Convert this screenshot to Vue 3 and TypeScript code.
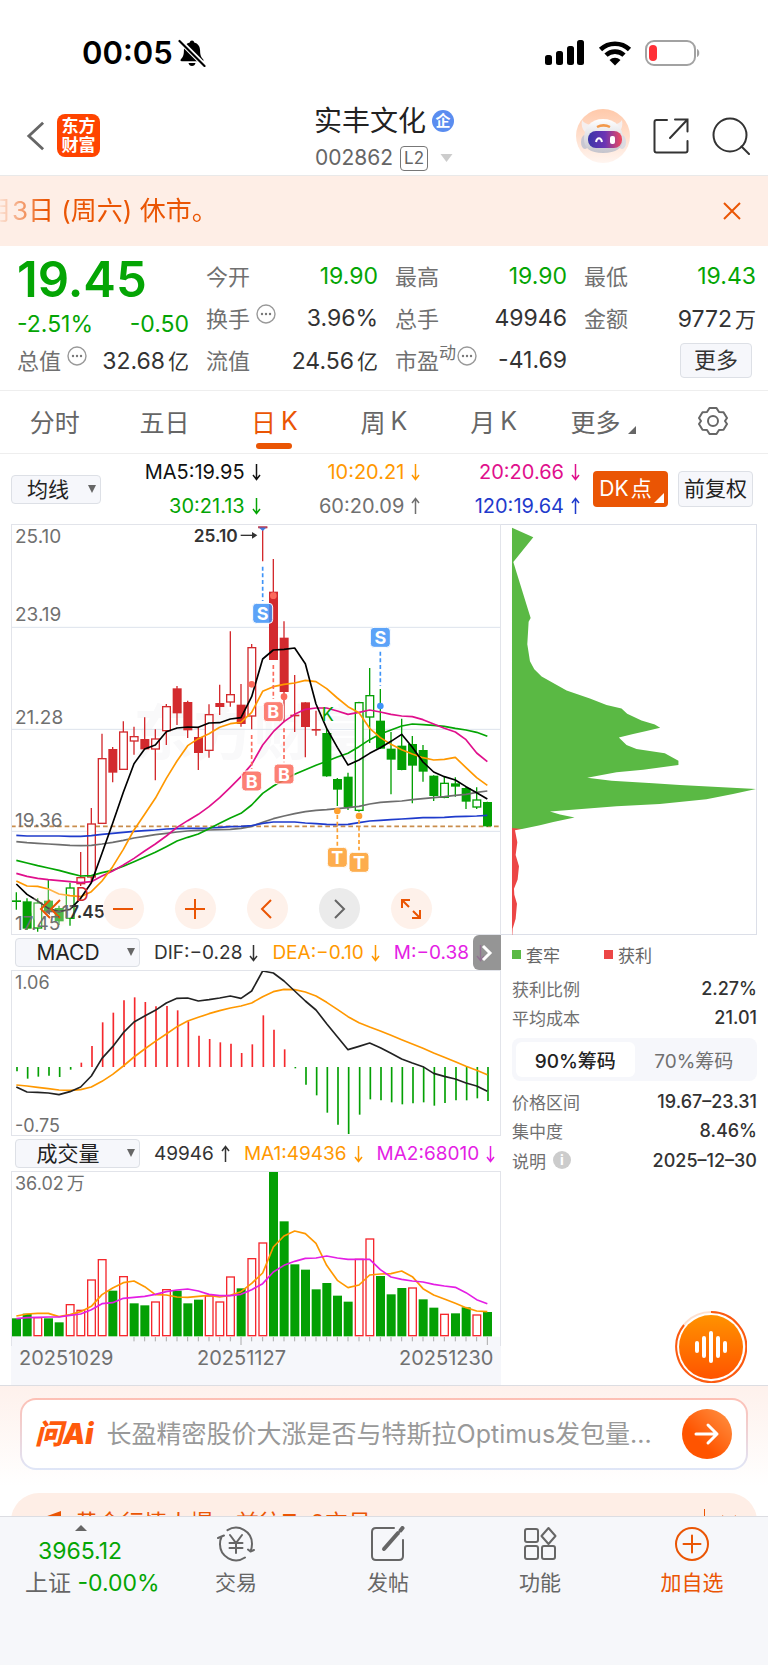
<script setup lang="ts">
import { h, ref } from 'vue'

type Tone = 'r' | 'g'
// upper wick, body top, body bottom, lower wick, tone, hollow body
type Candle = [number, number, number, number, Tone, boolean]

const Arrow = (props: { up?: boolean }) =>
  h('svg', { class: 'arrow', viewBox: '0 0 9 18', 'aria-hidden': 'true' }, [
    h('path', { d: props.up ? 'M4.5 17V1.5M1 6l3.5-4.5L8 6' : 'M4.5 1v15.5M1 12l3.5 4.5L8 12' }),
  ])
Arrow.props = { up: Boolean }

const Dots = () =>
  h('svg', { class: 'dots', viewBox: '0 0 20 20', 'aria-hidden': 'true' }, [
    h('circle', { cx: 10, cy: 10, r: 9, fill: 'none', stroke: '#999', 'stroke-width': 1.4 }),
    ...[6, 10, 14].map((cx) => h('circle', { cx, cy: 10, r: 1.2, fill: '#777' })),
  ])

const tabs = ['分时', '五日', '日K', '周K', '月K', '更多']
const tab = ref('日K')
const chips = ref('90')
const question = ref('')

const averages = [
  { text: 'MA5:19.95', tone: 'black', up: false },
  { text: '10:20.21', tone: 'orange', up: false },
  { text: '20:20.66', tone: 'pink', up: false },
  { text: '30:21.13', tone: 'green', up: false },
  { text: '60:20.09', tone: 'gray', up: true },
  { text: '120:19.64', tone: 'blue', up: true },
]

const STEP = 32.11
const at = (i: number) => Math.round(49 + i * STEP)
const line = (ys: number[]) => ys.map((y, i) => `${at(i)},${y}`).join(' ')

const candles: Candle[] = [
  [1132, 1157, 1160, 1184, 'g', false], [1150, 1160, 1240, 1245, 'g', false], [1150, 1163, 1240, 1250, 'g', true],
  [1095, 1158, 1188, 1195, 'g', false], [1172, 1180, 1218, 1230, 'g', false], [1103, 1118, 1211, 1232, 'g', true],
  [1011, 1087, 1107, 1113, 'r', true], [879, 926, 1087, 1103, 'r', true], [656, 730, 926, 926, 'r', true],
  [696, 703, 772, 802, 'r', false], [619, 650, 764, 764, 'r', true], [635, 664, 679, 719, 'r', true],
  [607, 673, 702, 702, 'r', false], [643, 671, 703, 796, 'r', true], [567, 574, 648, 690, 'r', true],
  [513, 521, 594, 630, 'r', false], [557, 562, 645, 669, 'r', false], [635, 667, 713, 765, 'r', false],
  [568, 598, 707, 728, 'r', true], [509, 565, 575, 600, 'r', false], [349, 538, 562, 575, 'r', true],
  [507, 570, 626, 635, 'r', false], [387, 397, 604, 643, 'r', true], [36, 36, 39, 139, 'r', false],
  [132, 231, 434, 434, 'r', false], [319, 369, 530, 622, 'r', false], [480, 600, 603, 651, 'r', false],
  [562, 563, 635, 727, 'r', false], [587, 643, 646, 662, 'r', false], [640, 655, 783, 785, 'g', false],
  [789, 793, 823, 873, 'g', false], [773, 786, 875, 885, 'g', false], [560, 562, 887, 890, 'g', true],
  [459, 541, 607, 684, 'g', true], [522, 618, 700, 702, 'g', false], [651, 702, 733, 838, 'g', false],
  [611, 693, 764, 766, 'g', false], [663, 688, 751, 865, 'g', false], [690, 706, 769, 800, 'g', false],
  [781, 783, 842, 858, 'g', false], [786, 804, 848, 850, 'g', true], [787, 806, 814, 845, 'g', false],
  [815, 820, 859, 882, 'g', false], [817, 854, 877, 882, 'g', true], [860, 862, 933, 935, 'g', false],
]

const priceLines = [
  { color: '#6e6e6e', ys: [980, 983, 985, 987, 989, 991, 992, 991, 987, 982, 976, 969, 964, 959, 955, 951, 948, 946, 945, 944, 943, 940, 934, 922, 911, 903, 896, 890, 886, 884, 881, 878, 874, 867, 862, 860, 858, 854, 851, 848, 845, 841, 838, 832, 828] },
  { color: '#1f3bcc', ys: [961, 963, 963, 963, 963, 964, 964, 962, 958, 955, 952, 949, 947, 945, 942, 941, 940, 940, 939, 937, 935, 934, 932, 925, 921, 921, 921, 924, 926, 928, 929, 928, 923, 918, 916, 914, 912, 910, 908, 908, 907, 905, 904, 903, 901] },
  { color: '#04a504', ys: [1036, 1044, 1052, 1059, 1066, 1075, 1083, 1082, 1073, 1066, 1054, 1040, 1026, 1012, 995, 978, 967, 957, 941, 925, 909, 895, 870, 835, 813, 795, 778, 764, 751, 739, 726, 715, 695, 674, 657, 645, 633, 627, 629, 631, 634, 640, 645, 652, 664] },
  { color: '#e0108c', ys: [1075, 1084, 1090, 1094, 1097, 1100, 1103, 1100, 1083, 1068, 1050, 1030, 1008, 987, 963, 937, 917, 898, 875, 848, 817, 785, 748, 690, 650, 620, 598, 583, 579, 579, 588, 598, 592, 585, 591, 598, 603, 605, 614, 627, 640, 651, 674, 714, 740] },
  { color: '#ff9800', ys: [1098, 1113, 1114, 1122, 1137, 1142, 1145, 1130, 1098, 1055, 1003, 945, 898, 850, 790, 738, 692, 671, 656, 637, 626, 622, 592, 529, 515, 508, 504, 496, 500, 521, 549, 575, 593, 640, 668, 688, 704, 717, 728, 735, 733, 727, 758, 788, 811] },
  { color: '#000', ys: [1107, 1138, 1158, 1180, 1190, 1183, 1150, 1103, 1015, 925, 832, 746, 702, 690, 650, 639, 636, 637, 624, 623, 612, 608, 545, 432, 405, 403, 399, 446, 567, 640, 697, 750, 735, 715, 698, 679, 658, 697, 741, 771, 785, 795, 815, 833, 852] },
]

const marks = [
  { i: 23, label: 'S', y: 295, from: 155, to: 258, dot: 0, color: '#3f93f7' },
  { i: 24, label: 'B', y: 590, from: 450, to: 552, dot: 242, color: '#fb6a5c' },
  { i: 22, label: 'B', y: 798, from: 660, to: 762, dot: 508, color: '#fb6a5c' },
  { i: 25, label: 'B', y: 777, from: 640, to: 742, dot: 545, color: '#fb6a5c' },
  { i: 34, label: 'S', y: 367, from: 410, to: 512, dot: 573, color: '#3f93f7' },
  { i: 30, label: 'T', y: 1027, from: 900, to: 992, dot: 888, color: '#fd9f2e' },
  { i: 32, label: 'T', y: 1042, from: 915, to: 1006, dot: 903, color: '#fd9f2e' },
]

const macdBars = [424, 446, 440, 437, 441, 419, 398, 348, 277, 248, 211, 202, 216, 229, 228, 241, 274, 317, 327, 337, 341, 369, 343, 256, 299, 358, 415, 464, 496, 548, 584, 612, 554, 508, 511, 517, 523, 520, 517, 527, 519, 511, 511, 505, 513]
const dif = [471, 486, 487, 489, 494, 485, 471, 438, 385, 350, 308, 276, 258, 241, 219, 205, 204, 213, 209, 204, 198, 205, 183, 123, 129, 153, 183, 213, 240, 281, 320, 359, 349, 339, 353, 370, 387, 399, 410, 430, 439, 447, 459, 468, 484]
const dea = [465, 468, 472, 476, 480, 481, 479, 471, 454, 433, 408, 381, 357, 334, 312, 290, 273, 262, 251, 242, 234, 228, 219, 200, 185, 178, 179, 186, 198, 217, 238, 260, 278, 291, 303, 316, 329, 342, 355, 369, 382, 395, 409, 421, 434]

const volTops = [563, 549, 559, 563, 575, 520, 537, 446, 385, 480, 436, 518, 524, 512, 475, 480, 518, 507, 494, 512, 437, 473, 382, 335, 123, 272, 401, 417, 476, 457, 495, 513, 384, 323, 436, 491, 472, 470, 506, 531, 549, 548, 530, 551, 544]
const volTones = 'ggrggrrrrgrggrrgggrrrgrrggggggggrrgggrggrggrg'
const volMa1 = [556, 550, 548, 548, 558, 552, 543, 527, 492, 472, 456, 451, 468, 492, 493, 499, 500, 497, 494, 499, 494, 483, 458, 427, 349, 316, 301, 309, 338, 404, 449, 471, 463, 433, 430, 429, 421, 438, 474, 493, 505, 518, 531, 541, 543]
const volMa2 = [564, 561, 560, 559, 559, 554, 550, 537, 519, 516, 503, 500, 497, 491, 483, 478, 475, 481, 491, 495, 495, 491, 477, 459, 424, 404, 392, 383, 382, 376, 382, 386, 386, 386, 417, 439, 446, 451, 454, 461, 466, 470, 486, 507, 519]
const ticks = Array.from({ length: 34 }, (_, k) => k + 11)

const tone = (t: string) => (t === 'r' ? '#d32a2e' : '#04a004')
</script>

<template>
  <div class="page">
    <div class="status">
      <span class="clock">00:05</span>
      <svg class="bell" viewBox="0 0 28 28" aria-hidden="true">
        <path d="M14 1.500c1.300 0 2 .8 2.200 1.900 3.900 1 5.900 4 5.900 8.200 0 5 1.200 6.700 3 8.700.8 1 .4 2-.9 2H3.800c-1.300 0-1.700-1-.9-2 1.800-2 3-3.700 3-8.700 0-4.200 2-7.200 5.900-8.200.2-1.100.9-1.900 2.200-1.900zM10.500 24h7c-.4 1.900-1.700 3-3.500 3s-3.100-1.100-3.500-3z" />
        <path d="M2.500 2.500 26 26" stroke="#fff" stroke-width="5" />
        <path d="M1.500 2 26.500 27" stroke="#000" stroke-width="2.200" stroke-linecap="round" />
      </svg>
      <svg class="signal" viewBox="0 0 40 26" aria-hidden="true">
        <rect y="15" width="7" height="10" rx="2.500" /><rect x="11" y="11" width="7" height="14" rx="2.500" />
        <rect x="22" y="6" width="7" height="19" rx="2.500" /><rect x="32" y="0" width="7" height="25" rx="2.500" />
      </svg>
      <svg class="wifi" viewBox="0 0 34 26" aria-hidden="true">
        <path d="M2.500 9.500a21 21 0 0 1 29 0M8 15.200a13 13 0 0 1 18 0" fill="none" stroke="#000" stroke-width="4.600" />
        <path d="M17 25.500l-5.500-5.600a8 8 0 0 1 11 0z" />
      </svg>
      <svg class="battery" viewBox="0 0 56 28" aria-hidden="true">
        <rect x="1" y="2" width="49" height="24" rx="8" fill="none" stroke="#a2a2a2" stroke-width="2" />
        <rect x="4" y="6" width="8" height="16" rx="4" fill="#ff3037" />
        <path d="M52 10c3 .5 3 7.500 0 8z" fill="#a2a2a2" />
      </svg>
    </div>

    <header class="header">
      <div class="side">
        <button class="plain" aria-label="返回">
          <svg class="back" viewBox="0 0 20 32"><path d="M18 2 3 16l15 14" fill="none" stroke="#666" stroke-width="3" /></svg>
        </button>
        <div class="brand"><span>东方</span><span>财富</span></div>
      </div>
      <div class="title">
        <h1>实丰文化<span class="badge">企</span></h1>
        <p>002862<span class="level">L2</span><svg class="drop" viewBox="0 0 12 8"><path d="M0 0h12L6 8z" fill="#ccc" /></svg></p>
      </div>
      <div class="side end">
        <button class="plain" aria-label="智能助手">
          <svg class="robot" viewBox="0 0 54 54">
            <defs>
              <linearGradient id="halo" x2="0" y2="1"><stop stop-color="#ffc9aa" /><stop offset="1" stop-color="#fff5f0" /></linearGradient>
              <linearGradient id="visor"><stop stop-color="#3a35a8" /><stop offset=".5" stop-color="#6b34b4" /><stop offset="1" stop-color="#f04a5c" /></linearGradient>
              <linearGradient id="shell" x2="0" y2="1"><stop stop-color="#fff" /><stop offset="1" stop-color="#c4c3cc" /></linearGradient>
            </defs>
            <circle cx="27" cy="27" r="27" fill="url(#halo)" />
            <path d="M6 11c-1 5 0 9 3 12l5-7c-3-1-6-2-8-5zM46 11c1 5 0 9-3 12l-5-7c3-1 6-2 8-5z" fill="#f5efef" />
            <ellipse cx="9" cy="33" rx="4" ry="7" fill="#c8c7d2" /><ellipse cx="46" cy="33" rx="4" ry="7" fill="#dcdbe2" />
            <path d="M27 10c12 0 20 8 20 20 0 9-7 14-20 14S8 39 8 30c0-12 7-20 19-20z" fill="url(#shell)" />
            <rect x="12" y="22" width="34" height="17" rx="8" fill="url(#visor)" />
            <path d="M21 18c4-2 9-2 13 0" fill="none" stroke="#f39a4c" stroke-width="2.500" />
            <path d="M20 33c1-5 5-5 6 0" fill="none" stroke="#fff" stroke-width="2" /><rect x="34" y="27" width="5" height="8" rx="2" fill="#fff" />
          </svg>
        </button>
        <button class="plain" aria-label="分享">
          <svg class="share" viewBox="0 0 36 36"><path d="M14 2H3.500Q1.500 2 1.500 4v28.500q0 2 2 2h29q2 0 2-2V23M22 1.500h12.500v12M34 2 17 20" /></svg>
        </button>
        <button class="plain" aria-label="搜索">
          <svg class="search" viewBox="0 0 38 38"><circle cx="18" cy="18" r="16.500" /><path d="m29.500 29.500 7.500 7.500" /></svg>
        </button>
      </div>
    </header>

    <div class="notice">
      <p>月3日 (周六) 休市。</p>
      <button class="plain" aria-label="关闭"><svg class="close" viewBox="0 0 18 18"><path d="m1 1 16 16M17 1 1 17" /></svg></button>
    </div>

    <section class="quote">
      <div class="last">
        <strong>19.45</strong>
        <div class="change"><span>-2.51%</span><span>-0.50</span></div>
      </div>
      <div class="cell"><span>今开</span><b class="green">19.90</b></div>
      <div class="cell"><span>最高</span><b class="green">19.90</b></div>
      <div class="cell"><span>最低</span><b class="green">19.43</b></div>
      <div class="cell"><span>换手<Dots /></span><b>3.96%</b></div>
      <div class="cell"><span>总手</span><b>49946</b></div>
      <div class="cell"><span>金额</span><b>9772<i>万</i></b></div>
      <div class="cell"><span>总值<Dots /></span><b>32.68<i>亿</i></b></div>
      <div class="cell"><span>流值</span><b>24.56<i>亿</i></b></div>
      <div class="cell"><span>市盈<sup>动</sup><Dots class="tight" /></span><b>-41.69</b></div>
      <div class="cell more"><button>更多</button></div>
    </section>

    <nav class="tabs">
      <button v-for="t in tabs" :key="t" :class="{ on: t === tab }" @click="tab = t">
        <template v-if="t.endsWith('K')">{{ t[0] }}<i>K</i></template>
        <template v-else>{{ t }}</template>
        <svg v-if="t === '更多'" class="corner" viewBox="0 0 8 8"><path d="M8 0v8H0z" fill="#666" /></svg>
      </button>
      <button aria-label="设置">
        <svg class="gear" viewBox="0 0 30 30">
          <path d="M11.500 2h7l2.500 4 4.500.3L29 12l-2 3 2 3-3.500 5.700-4.500.3-2.500 4h-7L9 24l-4.500-.3L1 18l2-3-2-3 3.500-5.700L9 6z" /><circle cx="15" cy="15" r="5" />
        </svg>
      </button>
    </nav>

    <section class="ma">
      <div class="pick small">
        <select aria-label="主图指标"><option>均线</option></select>
        <svg class="tri" viewBox="0 0 8 8"><path d="M0 0h8L4 8z" /></svg>
      </div>
      <div class="avgs">
        <span v-for="a in averages" :key="a.text" :class="a.tone">{{ a.text }}<Arrow :up="a.up" /></span>
      </div>
      <button class="dk">DK<i>点</i><svg viewBox="0 0 10 10"><path d="M10 0v10H0z" fill="#fff" /></svg></button>
      <button class="adj">前复权</button>
    </section>

    <section class="charts">
      <div class="left">
        <div class="plot">
          <svg viewBox="33 27 1470 1233" role="img" aria-label="日K线">
            <text class="mark-bg" x="400" y="720">东方财富</text>
            <path d="M33 337h1470M33 643h1470M33 949h1470" stroke="#dde3ec" stroke-width="3" />
            <path d="M33 934h1470" stroke="#c98d4c" stroke-width="5" stroke-dasharray="14 9" />
            <g v-for="(c, i) in candles" :key="i" :stroke="tone(c[4])" :fill="c[5] ? '#fff' : tone(c[4])">
              <path :d="`M${at(i)} ${c[0]}V${c[3]}`" stroke-width="4" />
              <rect :x="at(i) - 11" :y="c[1] + 1" width="23" :height="Math.max(c[2] - c[1] - 2, 1)" stroke-width="4" />
            </g>
            <polyline v-for="l in priceLines" :key="l.color" :points="line(l.ys)" :stroke="l.color" fill="none" stroke-width="5" stroke-linejoin="round" />
            <path d="M774 35h28l-14 13z" fill="#3f7be0" /><path d="M774 36h28" stroke="#d32a2e" stroke-width="3" />
            <g v-for="m in marks" :key="`${m.label}${m.i}`">
              <path :d="`M${at(m.i)} ${m.from}V${m.to}`" :stroke="m.color" stroke-width="5" stroke-dasharray="12 8" />
              <circle v-if="m.dot" :cx="at(m.i)" :cy="m.dot" r="10" :fill="m.color" />
              <rect :x="at(m.i) - 30" :y="m.y - 30" width="60" height="60" rx="11" :fill="m.color" fill-opacity=".85" stroke="#fff" stroke-width="3" />
              <text class="flag" :x="at(m.i)" :y="m.y + 20">{{ m.label }}</text>
            </g>
            <text class="dk-letter" x="227" y="1157" fill="#d32a2e">D</text>
            <text class="dk-letter" x="965" y="619" fill="#04a004">K</text>
            <text class="extreme" x="581" y="80">25.10</text>
            <path d="M722 61h44" stroke="#333" stroke-width="4" /><path d="m756 51 16 10-16 10z" fill="#333" />
            <text class="extreme" x="185" y="1210">17.45</text>
            <path d="M184 1190h-40" stroke="#333" stroke-width="4" /><path d="m150 1180-16 10 16 10z" fill="#333" />
          </svg>
          <div class="tools">
            <button class="ghost" aria-label="最早"><svg viewBox="0 0 30 30"><path d="M14 6 5 15l9 9M24 6l-9 9 9 9" /></svg></button>
            <button aria-label="缩小"><svg viewBox="0 0 30 30"><path d="M5 15h20" /></svg></button>
            <button aria-label="放大"><svg viewBox="0 0 30 30"><path d="M5 15h20M15 5v20" /></svg></button>
            <button aria-label="左移"><svg viewBox="0 0 30 30"><path d="m19 6-9 9 9 9" /></svg></button>
            <button class="off" aria-label="右移"><svg viewBox="0 0 30 30"><path d="m11 6 9 9-9 9" /></svg></button>
            <button aria-label="全屏"><svg viewBox="0 0 30 30"><path d="M6 14V6h8M6 6l7 7M24 16v8h-8M24 24l-7-7" /></svg></button>
          </div>
          <div class="axis price"><span>25.10</span><span>23.19</span><span>21.28</span><span>19.36</span><span>17.45</span></div>
        </div>

        <div class="bar">
          <div class="pick"><select aria-label="副图指标一"><option>MACD</option></select><svg class="tri" viewBox="0 0 8 8"><path d="M0 0h8L4 8z" /></svg></div>
          <span class="ink">DIF:−0.28<Arrow /></span><span class="orange">DEA:−0.10<Arrow /></span><span class="violet">M:−0.38<Arrow /></span>
          <button class="next" aria-label="展开"><svg viewBox="0 0 12 18"><path d="m2 2 7 7-7 7" /></svg></button>
        </div>
        <div class="plot">
          <svg viewBox="33 120 1470 498" role="img" aria-label="MACD">
            <path v-for="(y, i) in macdBars" :key="i" :d="`M${at(i) + 2} 411V${y}`" :stroke="y < 411 ? '#f5282d' : '#04a004'" stroke-width="5" />
            <polyline :points="line(dea)" fill="none" stroke="#ff9800" stroke-width="5" stroke-linejoin="round" />
            <polyline :points="line(dif)" fill="none" stroke="#222" stroke-width="5" stroke-linejoin="round" />
          </svg>
          <div class="axis"><span>1.06</span><span>-0.75</span></div>
        </div>

        <div class="bar">
          <div class="pick"><select aria-label="副图指标二"><option>成交量</option></select><svg class="tri" viewBox="0 0 8 8"><path d="M0 0h8L4 8z" /></svg></div>
          <span class="ink">49946<Arrow up /></span><span class="orange">MA1:49436<Arrow /></span><span class="violet">MA2:68010<Arrow /></span>
        </div>
        <div class="plot open">
          <svg viewBox="33 121 1470 525" role="img" aria-label="成交量">
            <path d="M33 618h1470v30H33z" fill="#f6f7fb" />
            <rect v-for="(y, i) in volTops" :key="i" :x="at(i) - 11" :y="y + 2" width="23" :height="613 - y" :fill="volTones[i] === 'r' ? '#fff' : '#04a004'" :stroke="volTones[i] === 'r' ? '#f5282d' : '#04a004'" stroke-width="4" />
            <polyline :points="line(volMa1)" fill="none" stroke="#ff9800" stroke-width="5" stroke-linejoin="round" />
            <polyline :points="line(volMa2)" fill="none" stroke="#e41ee4" stroke-width="5" stroke-linejoin="round" />
            <path v-for="i in ticks" :key="i" :d="`M${at(i)} 619V${i === 21 || i === 44 ? 643 : 632}`" stroke="#aaa" stroke-width="3" />
          </svg>
          <div class="axis"><span>36.02<i>万</i></span></div>
        </div>
        <div class="dates"><span>20251029</span><span>20251127</span><span>20251230</span></div>
      </div>

      <div class="right">
        <div class="chipplot">
          <svg viewBox="3 27 766 1233" role="img" aria-label="筹码分布">
            <path fill="#5ab944" d="M36 35 100 64 40 138 92 306 86 318 82 385 90 436 103 460 125 482 200 524 270 548 320 568 365 578 382 594 425 614 465 626 481 636 440 646 400 655 357 665 380 688 410 700 495 713 536 735V748L430 762 350 770 262 786 335 795 460 803 540 808 769 820 700 835 620 851 480 865 350 872 150 888 180 897 224 906 160 919 120 929 66 940H36z" />
            <path fill="#ec4646" d="M36 937 65 940 45 944 52 980 47 1018 57 1052 53 1092 42 1120 43 1138 51 1165 47 1210 38 1240 37 1259H36z" />
          </svg>
        </div>
        <div class="legend"><span><i class="sq g"></i>套牢</span><span><i class="sq r"></i>获利</span></div>
        <dl>
          <div><dt>获利比例</dt><dd>2.27%</dd></div>
          <div><dt>平均成本</dt><dd>21.01</dd></div>
        </dl>
        <div class="seg">
          <button :class="{ on: chips === '90' }" @click="chips = '90'">90%筹码</button>
          <button :class="{ on: chips === '70' }" @click="chips = '70'">70%筹码</button>
        </div>
        <dl>
          <div><dt>价格区间</dt><dd>19.67–23.31</dd></div>
          <div><dt>集中度</dt><dd>8.46%</dd></div>
          <div class="note"><dt>说明<span class="info">i</span></dt><dd>2025–12–30</dd></div>
        </dl>
      </div>
      <button class="voice" aria-label="语音播报">
        <svg viewBox="0 0 72 72">
          <defs><linearGradient id="fab" x2="0" y2="1"><stop stop-color="#ff9200" /><stop offset="1" stop-color="#ff5400" /></linearGradient></defs>
          <circle cx="36" cy="36" r="35" fill="#fff" stroke="#fde0d0" stroke-width="2" />
          <path d="M36 1A35 35 0 1 1 9 14" fill="none" stroke="#fb5a10" stroke-width="2" />
          <circle cx="36" cy="36" r="32" fill="url(#fab)" />
          <path d="M22 32v8M29 27v18M36 22v28M43 27v18M50 32v8" stroke="#fff" stroke-width="4" stroke-linecap="round" />
        </svg>
      </button>
    </section>

    <section class="ask">
      <form class="askbox" @submit.prevent>
        <em>问Ai</em>
        <input v-model="question" aria-label="提问" placeholder="长盈精密股价大涨是否与特斯拉Optimus发包量..." />
        <button aria-label="发送"><svg viewBox="0 0 26 24"><path d="M2 12h21M14 3l9 9-9 9" /></svg></button>
      </form>
      <div class="promo">
        <svg class="horn" viewBox="0 0 24 20"><path d="M0 8 22 0v20L0 14z" fill="#ea5504" /></svg>
        <span>黄金行情火爆，前往T+0交易</span>
        <i></i>
        <svg class="x2" viewBox="0 0 16 16"><path d="m1 1 14 14M15 1 1 15" stroke="#ea5504" stroke-width="2" /></svg>
      </div>
    </section>

    <nav class="dock">
      <a class="index" href="#index">
        <svg viewBox="0 0 12 6"><path d="M6 0l6 6H0z" fill="#666" /></svg>
        <span class="green">3965.12</span>
        <span>上证 <b class="green">-0.00%</b></span>
      </a>
      <a href="#trade">
        <svg viewBox="0 0 38 36"><path d="M10.500 4.200A16 16 0 0 1 35 18c0 3-.5 5-1.500 7M33.500 25.500l-2.500-2M33.500 25.500l3.500-1.500M28 31.500A16 16 0 0 1 3 18c0-3 .5-5 1.500-7M4.500 10.500 1 12M4.500 10.500 7 9.500M13 9l6 8 6-8M12.500 17h13M12.500 22h13M19 17v10" /></svg>交易
      </a>
      <a href="#post">
        <svg viewBox="0 0 38 36"><path d="M25 2H7Q3 2 3 6v24q0 4 4 4h23q4 0 4-4V14" /><path d="M15 23 29 7" stroke-width="4" /><path d="m31.500 4.500 2-2.500" stroke-width="4" /></svg>发帖
      </a>
      <a href="#tools">
        <svg viewBox="0 0 38 36"><rect x="4" y="3" width="13" height="13" rx="2" /><rect x="4" y="20" width="13" height="13" rx="2" /><rect x="21" y="20" width="13" height="13" rx="2" /><path d="m27.500 2 7 8-7 8-7-8z" stroke-linejoin="round" /></svg>功能
      </a>
      <a class="add" href="#add">
        <svg viewBox="0 0 38 36"><circle cx="19" cy="18" r="16" /><path d="M10.500 18h17M19 9.500v17" /></svg>加自选
      </a>
    </nav>
  </div>
</template>

<style>
body { margin: 0; background: #fff; }
</style>

<style scoped>
.page { min-height: 100vh; display: flex; flex-direction: column; overflow: hidden; background: #fff; color: #333; font-family: Inter, "Noto Sans CJK SC", sans-serif; font-size: 23px; }
.page * { box-sizing: border-box; }
button, select, input { font: inherit; color: inherit; margin: 0; }
button { border: 0; background: none; padding: 0; white-space: nowrap; }
svg { display: block; flex: none; }
i { font-style: normal; }
h1, p, dl, dd { margin: 0; }
b { font-weight: 400; }
.green { color: #04a504; }
.black { color: #111; }
.orange { color: #ff9800; }
.pink { color: #e0108c; }
.gray { color: #707070; }
.blue { color: #1f3bcc; }
.violet { color: #e41ee4; }
.ink { color: #333; }

.status { height: 95px; padding: 10px 67px 0 82px; display: flex; align-items: center; }
.clock { font-size: 31px; line-height: 40px; font-weight: 600; color: #000; }
.bell { width: 28px; height: 28px; margin-left: 5px; margin-right: auto; }
.signal { width: 40px; height: 26px; }
.wifi { width: 34px; height: 26px; margin: 0 13px; }
.battery { width: 56px; height: 28px; }

.header { height: 81px; padding: 0 18px; display: grid; grid-template-columns: 1fr auto 1fr; align-items: center; border-bottom: 1px solid #e9e9e9; }
.side { display: flex; align-items: center; gap: 12px; padding-left: 8px; }
.side.end { justify-content: flex-end; gap: 23px; padding: 0; }
.back { width: 19px; height: 32px; }
.brand { width: 43px; height: 43px; border-radius: 8px; background: #ff4400; color: #fff; display: flex; flex-direction: column; align-items: center; justify-content: center; font-size: 17px; line-height: 19px; font-weight: 700; }
.title { display: flex; flex-direction: column; align-items: center; padding-top: 7px; }
h1 { display: flex; align-items: center; gap: 6px; font-size: 28px; line-height: 38px; font-weight: 400; color: #222; }
.badge { width: 22px; height: 22px; border-radius: 50%; background: #5a8df0; color: #fff; font-size: 15px; line-height: 21px; text-align: center; font-weight: 700; }
.title p { display: flex; align-items: center; font-size: 21px; line-height: 36px; color: #666; }
.level { margin: 0 12px 0 7px; padding: 0 3px; border: 1px solid #777; border-radius: 4px; font-size: 17px; line-height: 23px; }
.drop { width: 13px; height: 8px; }
.robot { width: 54px; height: 54px; }
.share { width: 36px; height: 36px; }
.search { width: 38px; height: 38px; }
.share, .search { fill: none; stroke: #333; stroke-width: 2; stroke-linecap: round; }

.notice { height: 70px; padding-right: 27px; display: flex; align-items: center; justify-content: space-between; background: #feeee6; color: #ea5504; }
.notice p { margin-left: -14px; font-size: 26px; line-height: 36px; white-space: nowrap; -webkit-mask-image: linear-gradient(90deg, transparent 10px, #000 60px); mask-image: linear-gradient(90deg, transparent 10px, #000 60px); }
.close { width: 18px; height: 18px; stroke: #ea5504; stroke-width: 2; }

.quote { padding: 9px 12px 9px 17px; display: grid; grid-template-columns: repeat(4, 1fr); grid-auto-rows: 42px; column-gap: 17px; border-bottom: 1px solid #eee; }
.last { grid-row: span 2; display: flex; flex-direction: column; color: #04a504; }
.last strong { font-size: 49px; line-height: 49px; font-weight: 600; }
.change { height: 35px; display: flex; align-items: flex-end; justify-content: space-between; line-height: 30px; }
.cell { display: flex; align-items: center; justify-content: space-between; white-space: nowrap; color: #333; }
.cell > span { display: flex; align-items: center; padding-bottom: 3px; font-size: 22px; color: #707070; }
.cell i { margin-left: 3px; font-size: 21px; }
.dots { width: 20px; height: 20px; margin: 0 0 6px 6px; }
.dots.tight { margin-left: 1px; }
sup { font-size: 17px; line-height: 20px; margin-bottom: 12px; }
.cell.more { justify-content: flex-end; }
.more button { width: 72px; height: 35px; margin-right: 4px; border: 1px solid #dde0e6; border-radius: 4px; background: #f6f7fb; font-size: 22px; line-height: 32px; }

.tabs { height: 63px; display: grid; grid-template-columns: repeat(7, 1fr); border-bottom: 1px solid #eee; }
.tabs button { position: relative; display: flex; align-items: center; justify-content: center; padding-bottom: 2px; font-size: 25px; color: #666; }
.tabs i { margin-left: 5px; }
.tabs .on { color: #ea5504; }
.tabs .on::after { content: ""; position: absolute; left: 50%; bottom: 4px; width: 36px; height: 6px; margin-left: -18px; border-radius: 3px; background: #ea5504; }
.corner { width: 8px; height: 8px; margin: 18px 0 0 8px; }
.gear { width: 30px; height: 30px; fill: none; stroke: #666; stroke-width: 2; stroke-linejoin: round; }

.ma { height: 70px; padding: 0 15px 0 11px; display: flex; align-items: center; }
.pick { position: relative; width: 125px; height: 29px; flex: none; }
.pick.small { width: 90px; }
.pick select { width: 100%; height: 100%; padding: 0 19px 0 0; border: 1px solid #dde0e6; border-radius: 4px; background: #f6f7fb; appearance: none; font-size: 21px; line-height: 27px; text-align: center; text-align-last: center; color: #222; }
.pick.small select { padding: 0 16px 0 0; }
.tri { position: absolute; right: 5px; top: 10px; width: 8px; height: 8px; fill: #666; }
.avgs { flex: 1; display: grid; grid-template-columns: repeat(3, 1fr); font-size: 20px; line-height: 34px; }
.avgs span, .bar > span { display: flex; align-items: center; justify-content: flex-end; white-space: nowrap; }
.arrow { width: 9px; height: 18px; margin-left: 7px; fill: none; stroke: currentColor; stroke-width: 1.5; }
.dk, .adj { position: relative; width: 75px; height: 36px; border-radius: 4px; font-size: 21px; line-height: 34px; }
.dk { margin: 0 10px 0 13px; padding-right: 10px; background: #ea5504; color: #fff; }
.dk i { margin-left: 2px; }
.dk svg { position: absolute; right: 4px; bottom: 4px; width: 10px; height: 10px; }
.adj { border: 1px solid #dde0e6; background: #f6f7fb; color: #222; }

.charts { position: relative; padding: 0 11px; display: grid; grid-template-columns: 490fr 256fr; align-items: start; border-bottom: 1px solid #dcdde2; }
.left, .right { min-width: 0; }
.plot { position: relative; }
.plot::after { content: ""; position: absolute; inset: 0; border: 1px solid #e2e4ea; pointer-events: none; }
.plot.open::after { border-bottom: 0; }
.plot > svg, .chipplot > svg { width: 100%; height: auto; }
.chipplot { height: 411px; border: 1px solid #dcdfe8; border-left: 0; }
.mark-bg { font-size: 180px; font-weight: 700; fill: #f9f9fa; }
.flag { font-size: 54px; font-weight: 700; fill: #fff; text-anchor: middle; }
.dk-letter { font-size: 54px; }
.extreme { font-size: 52px; font-weight: 600; fill: #333; }
.axis { position: absolute; inset: 2px 0 0 4px; display: flex; flex-direction: column; justify-content: space-between; color: #707070; font-size: 18px; line-height: 21px; pointer-events: none; }
.axis.price { display: grid; grid-template-rows: 78fr 103fr 103fr 103fr 22fr; font-size: 19px; line-height: 22px; }
.axis i { margin-left: 3px; }
.tools { position: absolute; left: 4%; bottom: 6px; display: flex; gap: 31px; }
.tools button { width: 41px; height: 41px; display: flex; align-items: center; justify-content: center; border-radius: 50%; background: #fef1ea; }
.tools svg { width: 30px; height: 30px; fill: none; stroke: #ea5504; stroke-width: 2; }
.tools .ghost { background: rgba(254, 241, 234, 0.3); }
.tools .off { background: #ebebeb; }
.tools .off svg { stroke: #666; }

.bar { position: relative; height: 35px; padding-left: 4px; display: flex; align-items: center; font-size: 19px; }
.bar > span { margin-left: 14px; }
.next { position: absolute; right: 0; top: 0; width: 28px; height: 35px; display: flex; align-items: center; justify-content: center; border-radius: 6px 0 0 6px; background: rgba(130, 130, 130, 0.85); }
.next svg { width: 12px; height: 18px; fill: none; stroke: #fff; stroke-width: 3; }
.dates { height: 39px; padding-left: 8px; display: grid; grid-template-columns: 178fr 202fr 102fr; background: #f6f7fb; color: #707070; font-size: 20px; line-height: 24px; }

.legend, .right dl, .seg { margin-left: 11px; }
.legend { height: 39px; display: flex; align-items: center; gap: 44px; font-size: 17px; color: #666; }
.legend span { display: flex; align-items: center; gap: 5px; }
.sq { width: 9px; height: 9px; }
.sq.g { background: #5ab944; }
.sq.r { background: #ec4646; }
.right dl div { display: flex; justify-content: space-between; align-items: center; height: 29px; white-space: nowrap; }
dt { display: flex; align-items: center; font-size: 17px; color: #707070; }
dd { font-size: 18px; font-weight: 500; color: #333; }
.right dl .note { height: 30px; }
.info { width: 18px; height: 18px; margin-left: 7px; border-radius: 50%; background: #ccc; color: #fff; font-size: 14px; line-height: 18px; font-weight: 700; text-align: center; }
.seg { height: 43px; margin-top: 6px; margin-bottom: 6px; padding: 4px; display: grid; grid-template-columns: 1fr 1fr; border-radius: 8px; background: #f6f7fb; font-size: 19px; color: #707070; }
.seg .on { background: #fff; border-radius: 6px; color: #222; font-weight: 500; }
.voice { position: absolute; right: 21px; bottom: 2px; }
.voice svg { width: 72px; height: 72px; }

.ask { height: 130px; padding: 12px 20px 0; background: linear-gradient(#fef1ec, #fff 100px); overflow: hidden; }
.askbox { height: 72px; padding: 0 14px 0 13px; display: flex; align-items: center; border: 2px solid transparent; border-radius: 16px; background: linear-gradient(#fff, #fff) padding-box, linear-gradient(#fdbfb4, #dfe6f8) border-box; }
.askbox em { flex: none; font-size: 28px; line-height: 36px; font-weight: 900; font-style: italic; color: #ff5a0c; }
.askbox input { flex: 1; min-width: 0; height: 44px; margin: 0 8px 0 13px; padding: 0; border: 0; background: none; outline: 0; font-size: 25px; text-overflow: ellipsis; }
.askbox input::placeholder { color: #999; opacity: 1; }
.askbox button { width: 50px; height: 50px; flex: none; display: flex; align-items: center; justify-content: center; border-radius: 50%; background: linear-gradient(225deg, #ff9547, #ff5400 65%); }
.askbox button svg { width: 26px; height: 24px; fill: none; stroke: #fff; stroke-width: 3; stroke-linecap: round; stroke-linejoin: round; }
.promo { height: 60px; margin: 23px -9px 0; padding: 16px 20px 0 28px; display: flex; align-items: flex-start; border-radius: 28px; background: #feeee6; color: #ea5504; font-size: 23px; line-height: 28px; }
.horn { width: 24px; height: 20px; margin: 2px 12px 0 0; }
.promo i { width: 1px; height: 20px; margin: 0 16px 0 auto; background: #ea5504; }
.x2 { width: 16px; height: 16px; margin-top: 6px; }

.dock { flex: 1 0 148px; padding-top: 8px; display: grid; grid-template-columns: 160fr 152fr 152fr 152fr 152fr; align-items: start; border-top: 1px solid #dcdde2; background: #f6f7fa; }
.dock a { display: flex; flex-direction: column; align-items: center; gap: 6px; padding-top: 1px; color: #666; text-decoration: none; font-size: 21px; line-height: 30px; white-space: nowrap; }
.dock a > svg { width: 38px; height: 36px; fill: none; stroke: #666; stroke-width: 2; stroke-linecap: round; }
.dock .index { gap: 0; font-size: 23px; line-height: 32px; padding: 0 0 0 25px; align-items: flex-start; }
.dock .index > svg { width: 12px; height: 6px; margin: 0 0 4px 50px; stroke: none; }
.index > .green { margin-left: 13px; }
.dock .add { color: #ea5504; }
.dock .add svg { stroke: #ea5504; }
</style>
